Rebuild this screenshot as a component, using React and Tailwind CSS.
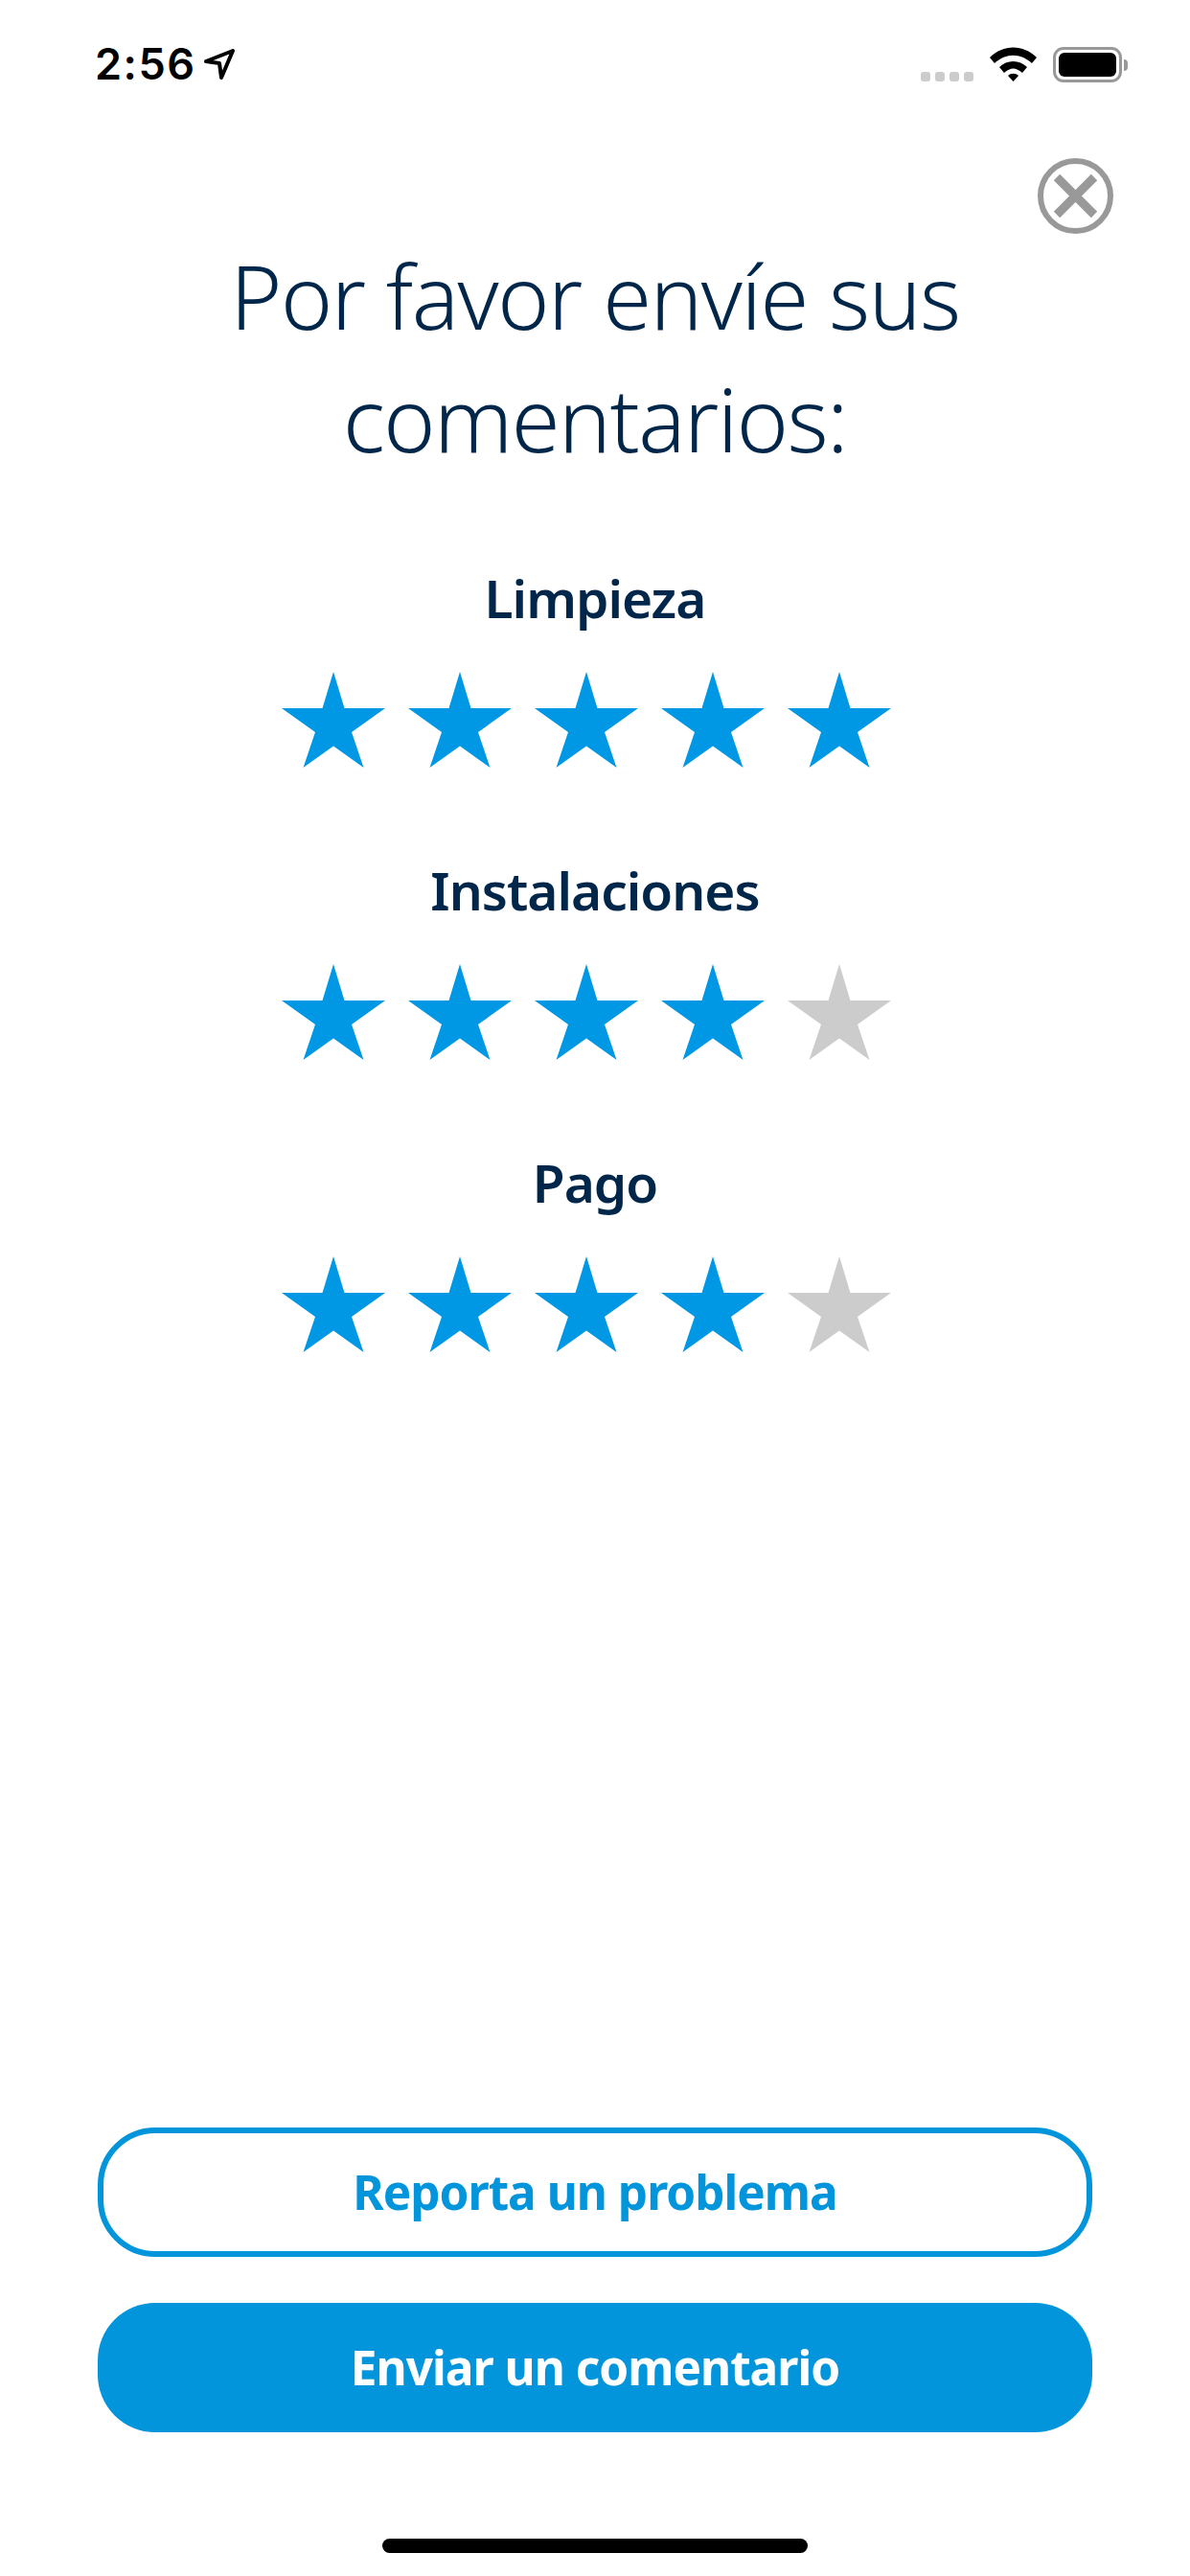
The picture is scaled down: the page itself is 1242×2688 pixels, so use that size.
import React from 'react';

const ratings = [
    { label: 'Limpieza', value: 5 },
    { label: 'Instalaciones', value: 4 },
    { label: 'Pago', value: 4 },
];

const Star = ({ filled }) => (
    <svg width="108" height="100" viewBox="0 0 108 100" className={filled ? 'fill-[#0098e4]' : 'fill-[#cccccc]'}>
        <polygon points="54,0 65.5,38 108,38 73,63 85.5,100 54,77.5 22.5,100 35,63 0,38 42.5,38" />
    </svg>
);

const StatusBar = () => (
    <div className="h-[136px] pl-[99px] pr-[65px] pt-[41px] flex justify-between items-start">
        <div className="flex items-center gap-[9px]">
            <span className="text-[45px] leading-[52px] font-semibold tracking-[1.5px] text-black font-['Inter',sans-serif]">2:56</span>
            <svg width="32" height="32" viewBox="0 0 32 32" fill="none" stroke="#000" strokeWidth="4" strokeLinejoin="round">
                <path d="M2 13 L30 2 L18 30 L16 15 Z" />
            </svg>
        </div>
        <div className="flex items-start pt-[8px]">
            <div className="flex gap-[5px] mt-[26px] mr-[17px]">
                <div className="w-[10px] h-[10px] rounded-[3px] bg-[#cccccc]"></div>
                <div className="w-[10px] h-[10px] rounded-[3px] bg-[#cccccc]"></div>
                <div className="w-[10px] h-[10px] rounded-[3px] bg-[#cccccc]"></div>
                <div className="w-[10px] h-[10px] rounded-[3px] bg-[#cccccc]"></div>
            </div>
            <svg width="49" height="36" viewBox="0 0 49 36" className="mr-[17px]">
                <path d="M0 11 C14 -3 35 -3 49 11 L44 17 C32 6 17 6 5 17 Z" fill="#000" />
                <path d="M10 21 C18 13 31 13 39 21 L34 27 C27 21 22 21 15 27 Z" fill="#000" />
                <path d="M19 30 C22 27 27 27 30 30 L24.5 36 Z" fill="#000" />
            </svg>
            <div className="flex items-center">
                <div className="w-[72px] h-[37px] rounded-[11px] border-[3px] border-[#999999] p-[3px]">
                    <div className="w-full h-full rounded-[6px] bg-black"></div>
                </div>
                <div className="w-[4px] h-[12px] ml-[2px] rounded-r-[4px] bg-[#999999]"></div>
            </div>
        </div>
    </div>
);

const App = () => {
    return (
        <div className="w-[1242px] h-[2688px] bg-white flex flex-col font-['Noto_Sans',sans-serif] overflow-hidden">
            <StatusBar />

            <div className="flex justify-end pr-[80px] pt-[29px]">
                <svg width="79" height="79" viewBox="0 0 79 79" fill="none" stroke="#999999">
                    <circle cx="39.5" cy="39.5" r="36.5" strokeWidth="6" />
                    <path d="M20 20 L59 59 M59 20 L20 59" strokeWidth="9" />
                </svg>
            </div>

            <h1 className="mt-[1px] text-center text-[92px] leading-[128px] font-light tracking-[-1.5px] text-[#00264a]">
                Por favor envíe sus<br />comentarios:
            </h1>

            <div className="mt-[88px] flex flex-col gap-[93px]">
                {ratings.map((r) => (
                    <div key={r.label} className="flex flex-col items-center">
                        <div className="text-[55px] leading-[70px] font-semibold tracking-[-1px] text-[#00264a]">{r.label}</div>
                        <div className="mt-[42px] pr-[18px] flex gap-[24px]">
                            {[1, 2, 3, 4, 5].map((n) => <Star key={n} filled={n <= r.value} />)}
                        </div>
                    </div>
                ))}
            </div>

            <div className="mt-auto px-[102px] flex flex-col gap-[48px]">
                <button className="h-[135px] rounded-[60px] border-[6px] border-[#0295db] bg-white text-[#0295db] text-[49.5px] font-bold tracking-[-1px]">Reporta un problema</button>
                <button className="h-[135px] rounded-[60px] bg-[#0295db] text-white text-[49.5px] font-bold tracking-[-1px]">Enviar un comentario</button>
            </div>

            <div className="mt-[111px] mb-[24px] self-center w-[444px] h-[15px] rounded-full bg-black"></div>
        </div>
    );
};

export default App;
